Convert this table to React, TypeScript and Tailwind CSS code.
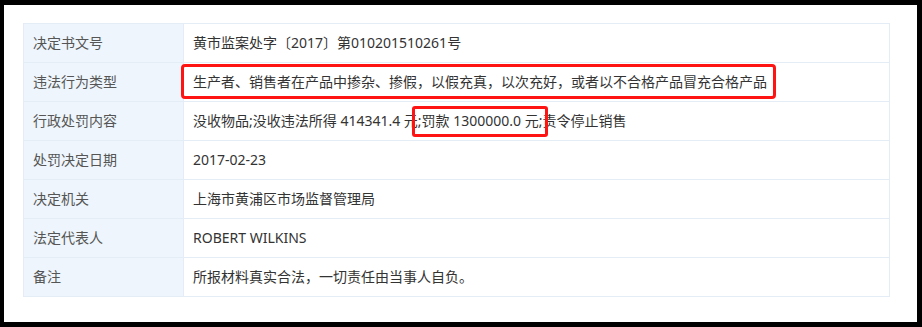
import React from "react";

type Row = { label: string; value: string };

const rows: Row[] = [
  { label: "决定书文号", value: "黄市监案处字〔2017〕第010201510261号" },
  {
    label: "违法行为类型",
    value: "生产者、销售者在产品中掺杂、掺假，以假充真，以次充好，或者以不合格产品冒充合格产品",
  },
  {
    label: "行政处罚内容",
    value: "没收物品;没收违法所得 414341.4 元;罚款 1300000.0 元;责令停止销售",
  },
  { label: "处罚决定日期", value: "2017-02-23" },
  { label: "决定机关", value: "上海市黄浦区市场监督管理局" },
  { label: "法定代表人", value: "ROBERT WILKINS" },
  { label: "备注", value: "所报材料真实合法，一切责任由当事人自负。" },
];

const font = {
  fontFamily: '"Noto Sans", "Noto Sans CJK SC", sans-serif',
};

export default function App() {
  return (
    <div className="w-[922px] h-[327px] bg-black pt-[5px] pl-[4px]" style={font}>
      <div className="relative w-[913px] h-[317px] bg-white pt-[18px] pl-[19px]">
        <table className="w-[867px] border-collapse text-[14px] leading-none">
          <tbody>
            {rows.map((r) => (
              <tr key={r.label} className="h-[39px]">
                <td className="w-[160px] border border-[#e4edf5] bg-[#eef5fc] pl-[9px] text-[#555]">
                  {r.label}
                </td>
                <td className="border border-[#e4edf5] pl-[9px] text-[#333]">{r.value}</td>
              </tr>
            ))}
          </tbody>
        </table>
        <div className="absolute left-[177px] top-[59px] w-[595px] h-[35px] rounded-[4px] border-[3px] border-[#ff1414]" />
        <div className="absolute left-[408px] top-[101px] w-[136px] h-[31px] rounded-[3px] border-[3px] border-[#ff1414]" />
      </div>
    </div>
  );
}
